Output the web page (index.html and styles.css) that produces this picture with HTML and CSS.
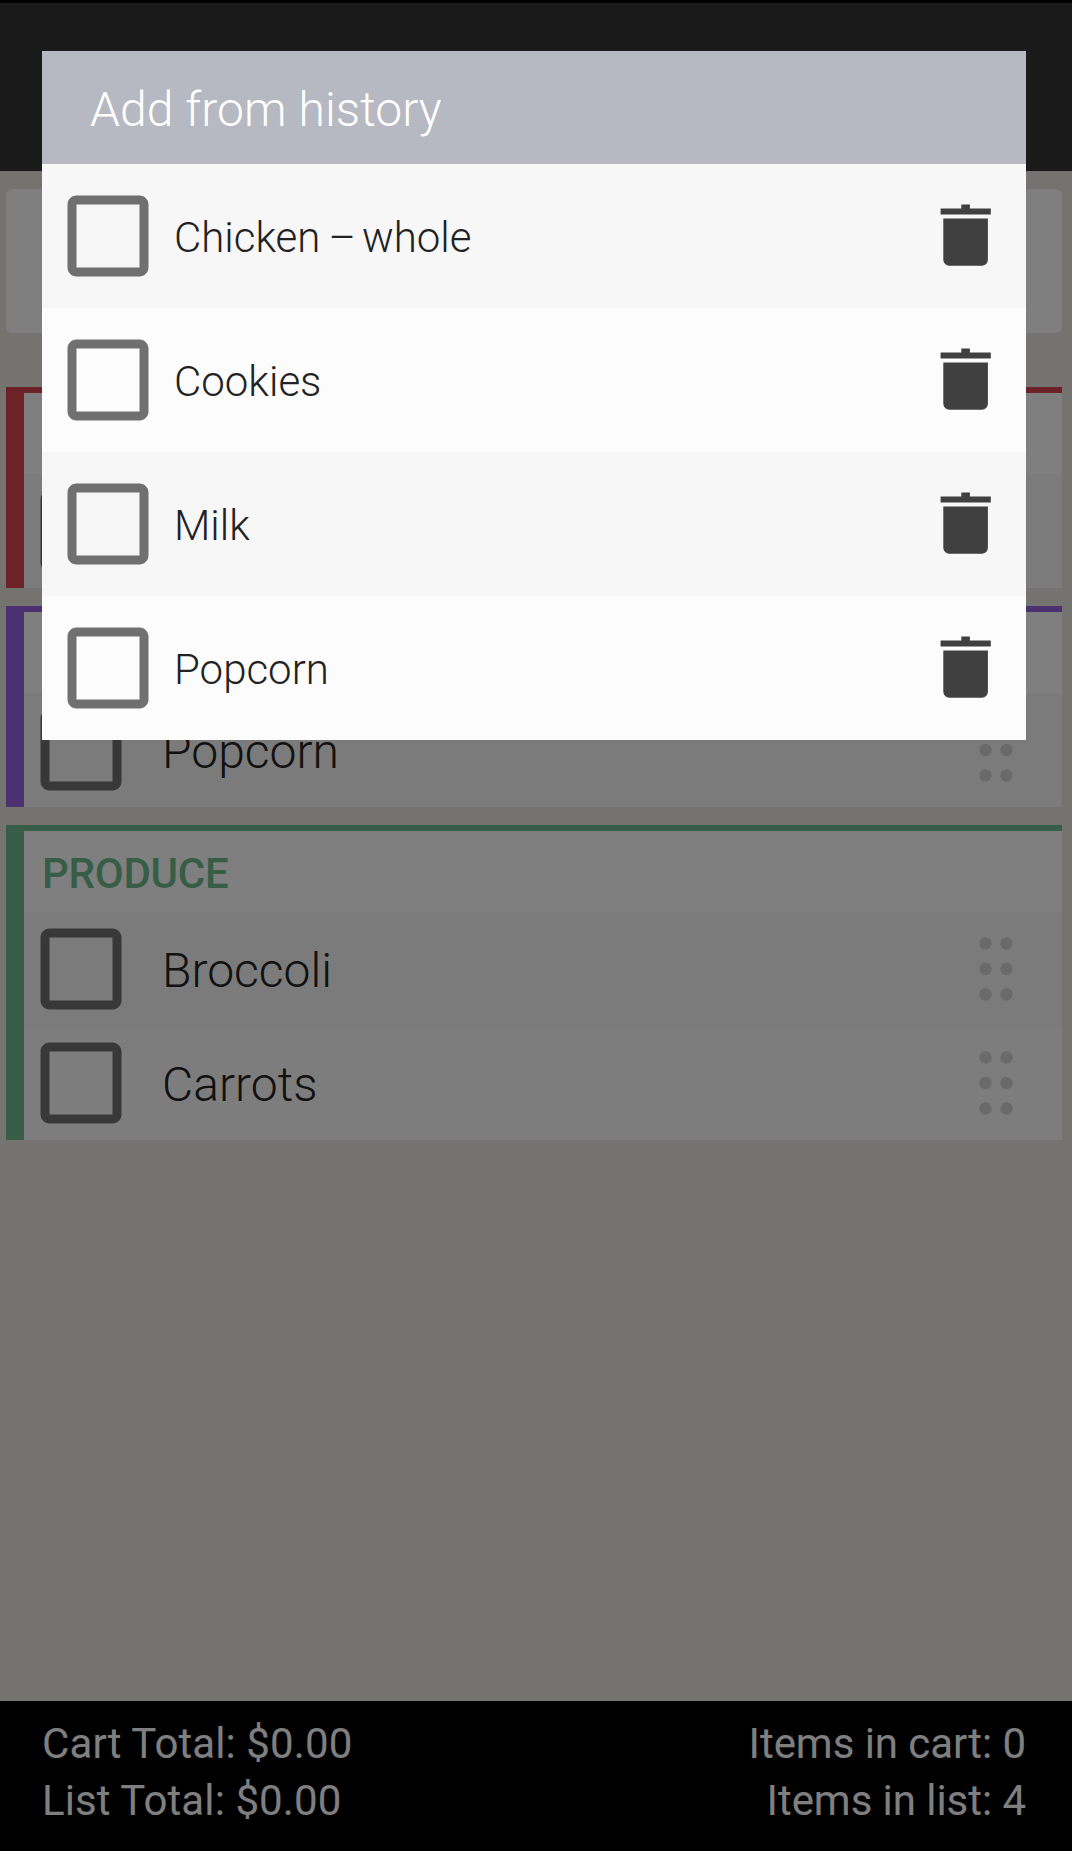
FILE: index.html
```
<!DOCTYPE html>
<html lang="en">
<head>
<meta charset="UTF-8">
<meta name="viewport" content="width=device-width, initial-scale=1.0">
<title>Shopping List</title>
<link rel="stylesheet" href="styles.css">
</head>
<body>

<svg class="symbols">
  <symbol id="checkbox" viewBox="0 0 24 24">
    <path d="M19 5v14H5V5h14m0-2H5c-1.1 0-2 .9-2 2v14c0 1.1.9 2 2 2h14c1.1 0 2-.9 2-2V5c0-1.1-.9-2-2-2z"/>
  </symbol>
  <symbol id="drag" viewBox="0 0 36 66">
    <circle cx="7.5" cy="7.5" r="6.2"/>
    <circle cx="28.5" cy="7.5" r="6.2"/>
    <circle cx="7.5" cy="33" r="6.2"/>
    <circle cx="28.5" cy="33" r="6.2"/>
    <circle cx="7.5" cy="58.5" r="6.2"/>
    <circle cx="28.5" cy="58.5" r="6.2"/>
  </symbol>
  <symbol id="trash" viewBox="0 0 52 64">
    <path d="M21.3 .4h8.6v4.2h20.9v5.8H.6V4.6h20.7z"/>
    <path d="M3.3 14.4h44.6v41.4a6 6 0 0 1-6 6H9.3a6 6 0 0 1-6-6z"/>
  </symbol>
</svg>

<div class="app">
  <div class="toolbar"></div>

  <div class="content">
    <div class="add-box"></div>

    <div class="group red">
      <div class="group-title"></div>
      <div class="item">
        <svg class="checkbox"><use href="#checkbox"/></svg>
      </div>
    </div>

    <div class="group purple">
      <div class="group-title"></div>
      <div class="item">
        <svg class="checkbox"><use href="#checkbox"/></svg>
        <span class="item-name">Popcorn</span>
        <svg class="drag"><use href="#drag"/></svg>
      </div>
    </div>

    <div class="group green">
      <div class="group-title">PRODUCE</div>
      <div class="item">
        <svg class="checkbox"><use href="#checkbox"/></svg>
        <span class="item-name">Broccoli</span>
        <svg class="drag"><use href="#drag"/></svg>
      </div>
      <div class="item">
        <svg class="checkbox"><use href="#checkbox"/></svg>
        <span class="item-name">Carrots</span>
        <svg class="drag"><use href="#drag"/></svg>
      </div>
    </div>
  </div>

  <div class="footer">
    <div class="totals">
      <div>Cart Total: $0.00</div>
      <div>List Total: $0.00</div>
    </div>
    <div class="totals right">
      <div>Items in cart: 0</div>
      <div>Items in list: 4</div>
    </div>
  </div>
</div>

<div class="overlay">
  <div class="dialog">
    <div class="dialog-title">Add from history</div>
    <div class="history-row">
      <svg class="checkbox"><use href="#checkbox"/></svg>
      <span class="history-name">Chicken<span class="dash"> – </span>whole</span>
      <svg class="trash"><use href="#trash"/></svg>
    </div>
    <div class="history-row">
      <svg class="checkbox"><use href="#checkbox"/></svg>
      <span class="history-name">Cookies</span>
      <svg class="trash"><use href="#trash"/></svg>
    </div>
    <div class="history-row">
      <svg class="checkbox"><use href="#checkbox"/></svg>
      <span class="history-name">Milk</span>
      <svg class="trash"><use href="#trash"/></svg>
    </div>
    <div class="history-row">
      <svg class="checkbox"><use href="#checkbox"/></svg>
      <span class="history-name">Popcorn</span>
      <svg class="trash"><use href="#trash"/></svg>
    </div>
  </div>
</div>

</body>
</html>
```
FILE: styles.css
```
* {
  box-sizing: border-box;
}
body {
  margin: 0;
  font-family: Roboto, sans-serif;
  color: #222;
}
.symbols {
  display: none;
}
.app {
  display: flex;
  flex-direction: column;
  height: 1851px;
  background-color: #e9e6de;
}
.toolbar {
  height: 171px;
  border-top: 3px solid #000;
  background-color: #343434;
}
.content {
  flex: 1;
  padding: 18px 10px 0 6px;
}
.add-box {
  height: 144px;
  margin-bottom: 54px;
  border-radius: 6px;
  background-color: #fff;
}
.group {
  margin-bottom: 18px;
  border-top: 6px solid;
  background-color: #fff;
}
.red {
  border-color: #d8444e;
  box-shadow: inset 18px 0 #d8444e;
}
.purple {
  border-color: #9862e0;
  box-shadow: inset 18px 0 #9862e0;
}
.green {
  border-color: #6eba8e;
  box-shadow: inset 18px 0 #6eba8e;
}
.group-title {
  height: 81px;
  padding-left: 36px;
  font-size: 42px;
  font-weight: 500;
  line-height: 86px;
  letter-spacing: -0.25px;
  color: #6eba8e;
}
.item {
  display: flex;
  align-items: center;
  height: 114px;
  margin-left: 18px;
  padding: 0 48px 0 3px;
  background-color: #f7f7f7;
}
.item:nth-child(odd) {
  background-color: #fbfbfb;
}
.checkbox {
  width: 108px;
  height: 108px;
  fill: #707070;
}
.item-name {
  flex: 1;
  margin-left: 27px;
  padding-top: 4px;
  font-size: 48px;
  font-weight: 300;
  line-height: 56px;
}
.drag {
  width: 36px;
  height: 66px;
  fill: #d4d4d4;
}
.footer {
  display: flex;
  justify-content: space-between;
  height: 150px;
  padding: 14px 46px 0 42px;
  background-color: #000;
  color: #fff;
  font-size: 42px;
  line-height: 57px;
}
.totals {
  letter-spacing: 0.1px;
}
.right {
  letter-spacing: -0.05px;
  text-align: right;
}
.overlay {
  position: absolute;
  top: 0;
  left: 0;
  width: 100%;
  height: 1851px;
  padding: 51px 46px 0 42px;
  background-color: rgba(0, 0, 0, 0.5);
}
.dialog-title {
  height: 113px;
  padding-left: 48px;
  background-color: #b6b9c2;
  color: #fff;
  font-size: 48px;
  font-weight: 300;
  line-height: 117px;
  letter-spacing: 0.07px;
}
.history-row {
  display: flex;
  align-items: center;
  height: 144px;
  padding: 0 34px 0 12px;
  background-color: #fcfcfc;
}
.history-row:nth-child(even) {
  background-color: #f7f7f7;
}
.history-name {
  flex: 1;
  margin-left: 12px;
  padding-top: 4px;
  font-size: 42px;
  font-weight: 300;
  line-height: 50px;
}
.dash {
  letter-spacing: -2.1px;
}
.trash {
  width: 52px;
  height: 64px;
  fill: #404040;
}
```
